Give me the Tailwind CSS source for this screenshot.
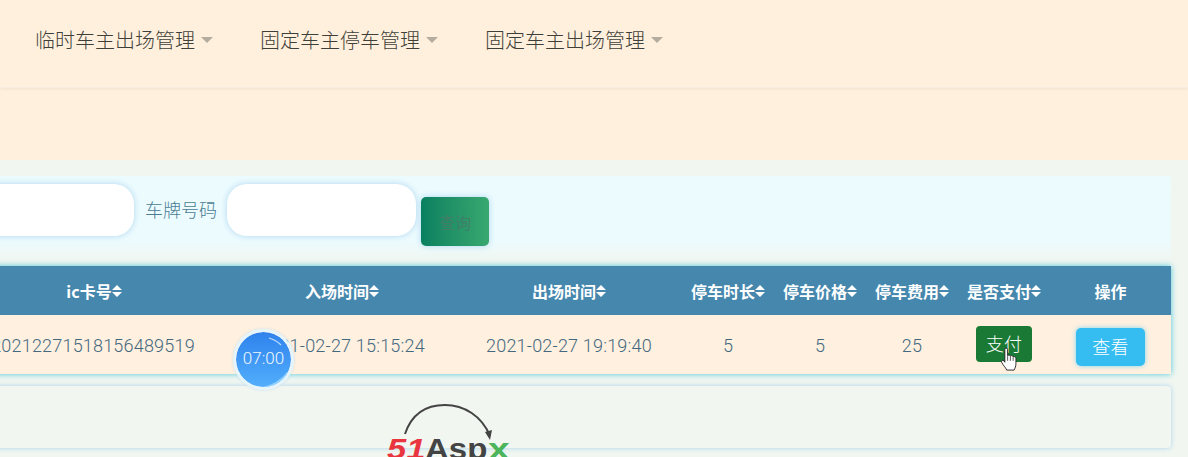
<!DOCTYPE html>
<html lang="zh-CN">
<head>
<meta charset="UTF-8">
<title>停车管理</title>
<script src="https://cdn.jsdelivr.net/npm/@tailwindcss/browser@4"></script>
</head>
<body class="bg-[#f1f6f0] font-['Noto_Sans_CJK_SC','Noto_Sans',sans-serif]">
<div class="relative w-[1188px] h-[457px] overflow-hidden">
  <!-- top nav -->
  <div class="bg-[#fff0dd]">
    <nav class="h-[88px] flex items-center gap-[47px] pl-[35px] pb-[8px] text-[20px] font-light text-[#3f3f3a] border-b border-[#f6ece0] shadow-[0_1px_3px_rgba(0,0,0,0.06)]">
      <a class="flex items-center">临时车主出场管理<span class="ml-[6px] w-0 h-0 border-x-[6px] border-x-transparent border-t-[6px] border-t-[#b5aca0]"></span></a>
      <a class="flex items-center">固定车主停车管理<span class="ml-[6px] w-0 h-0 border-x-[6px] border-x-transparent border-t-[6px] border-t-[#b5aca0]"></span></a>
      <a class="flex items-center">固定车主出场管理<span class="ml-[6px] w-0 h-0 border-x-[6px] border-x-transparent border-t-[6px] border-t-[#b5aca0]"></span></a>
    </nav>
    <div class="h-[72px]"></div>
  </div>

  <!-- content, scrolled sideways so the left part is cut off -->
  <div class="w-[1211px] -ml-[40px] pt-[16px]">
    <!-- search -->
    <div class="h-[86px] bg-linear-to-b from-[#ecfbfe] from-75% to-[#f1f6f0] flex items-start pt-[8px] pl-[15px]">
      <div class="w-[159px] h-[52px] bg-white rounded-[20px] shadow-[0_0_6px_#aed6f0]"></div>
      <label class="ml-[11px] mr-[10px] h-[52px] leading-[50px] text-[18px] font-light text-[#4a7c93]">车牌号码</label>
      <div class="w-[189px] h-[52px] bg-white rounded-[20px] shadow-[0_0_6px_#aed6f0]"></div>
      <button class="ml-[5px] mt-[13px] w-[68px] h-[49px] rounded-[5px] bg-linear-to-r from-[#078060] to-[#38a870] text-[16px] text-[#3f7f68] shadow-[0_0_6px_#aed6f0]">查询</button>
    </div>

    <!-- table -->
    <div class="mt-[4px] shadow-[0_0_6px_#4fc6d8]">
      <div class="h-[49px] bg-[#4587ad] grid grid-cols-[268px_228px_226px_92px_92px_92px_92px_121px] items-center text-center text-[16px] font-bold text-white">
        <div class="flex items-center justify-center">ic卡号<svg class="w-[10px] h-[14px]" viewBox="0 0 10 14" fill="#fff"><path d="M5 1 10 6H0zM5 13 0 8h10z"/></svg></div>
        <div class="flex items-center justify-center">入场时间<svg class="w-[10px] h-[14px]" viewBox="0 0 10 14" fill="#fff"><path d="M5 1 10 6H0zM5 13 0 8h10z"/></svg></div>
        <div class="flex items-center justify-center">出场时间<svg class="w-[10px] h-[14px]" viewBox="0 0 10 14" fill="#fff"><path d="M5 1 10 6H0zM5 13 0 8h10z"/></svg></div>
        <div class="flex items-center justify-center">停车时长<svg class="w-[10px] h-[14px]" viewBox="0 0 10 14" fill="#fff"><path d="M5 1 10 6H0zM5 13 0 8h10z"/></svg></div>
        <div class="flex items-center justify-center">停车价格<svg class="w-[10px] h-[14px]" viewBox="0 0 10 14" fill="#fff"><path d="M5 1 10 6H0zM5 13 0 8h10z"/></svg></div>
        <div class="flex items-center justify-center">停车费用<svg class="w-[10px] h-[14px]" viewBox="0 0 10 14" fill="#fff"><path d="M5 1 10 6H0zM5 13 0 8h10z"/></svg></div>
        <div class="flex items-center justify-center">是否支付<svg class="w-[10px] h-[14px]" viewBox="0 0 10 14" fill="#fff"><path d="M5 1 10 6H0zM5 13 0 8h10z"/></svg></div>
        <div>操作</div>
      </div>
      <div class="h-[59px] bg-[#fff0df] grid grid-cols-[268px_228px_226px_92px_92px_92px_92px_121px] items-center text-center text-[18px] tracking-[0.2px] font-light font-['Roboto','Noto_Sans_CJK_SC',sans-serif] text-[#44697f]">
        <div class="pr-[2px] pt-[1px]">20212271518156489519</div>
        <div class="pt-[1px]">2021-02-27 15:15:24</div>
        <div class="pt-[1px]">2021-02-27 19:19:40</div>
        <div class="pt-[1px]">5</div>
        <div class="pt-[1px]">5</div>
        <div class="pt-[1px]">25</div>
        <div class="flex justify-center"><button class="w-[56px] h-[36px] mb-[2px] rounded-[4px] bg-[#1a7a35] text-white text-[18px] font-light font-['Noto_Sans_CJK_SC',sans-serif]">支付</button></div>
        <div class="flex justify-center"><button class="w-[69px] h-[38px] mt-[4px] rounded-[5px] bg-[#35bdf2] text-white text-[18px] font-light font-['Noto_Sans_CJK_SC',sans-serif] shadow-[0_0_5px_#7fd6f0]">查看</button></div>
      </div>
    </div>

    <!-- footer panel -->
    <div class="mt-[12px] h-[62px] bg-[#f2f6f1] rounded-[4px] shadow-[0_0_5px_#a8d2ea]"></div>
  </div>

  <!-- timer badge -->
  <div class="absolute left-[233px] top-[329px] w-[61px] h-[61px] rounded-full border-[3px] border-[#e6f5fb] bg-clip-padding bg-linear-to-b from-[#2f82ec] to-[#52aefc] shadow-[0_0_3px_#c5dcea] flex items-center justify-center pb-[2px] text-[17px] font-light font-['Roboto',sans-serif] text-[#f0f8ff] overflow-hidden">
    07:00
    <svg class="absolute inset-0 w-full h-full" viewBox="0 0 55 55" fill="none"><path d="M33 6Q40 8 45 13" stroke="#bcdcff" stroke-width="1.3"/><path d="M26 55Q42 52 51 40L55 55Z" fill="#8fd0ff"/></svg>
  </div>

  <!-- hand cursor -->
  <svg class="absolute left-[1000px] top-[347px] w-[18px] h-[24px]" viewBox="0 0 19 26"><path d="M5 2.500C5 .8 8 .8 8 2.500V9.500C8.500 8.500 10.500 8.500 11 9.800 11.800 9 13.500 9.200 14 10.500 15 10 17 10.500 17 12.500V18C17 21 16 23 15 25H7C6 22 3 20 1.500 16.500 .8 15 2.500 13.500 4 15L5 16.500Z" fill="#fff" stroke="#222" stroke-width="1"/><path d="M8 10v5M11 10v5M14 11v4" stroke="#222" stroke-width=".8"/></svg>

  <!-- 51Aspx watermark -->
  <div class="absolute left-[387px] top-[402px] w-[126px] h-[55px]">
    <svg class="absolute left-[16px] top-[0px] w-[92px] h-[40px]" viewBox="0 0 92 40" fill="none"><path d="M2 32C9 11 24 3 42 3 61 3 79 14 87 34" stroke="#444" stroke-width="2"/><path d="M82 30 87 38 89 28Z" fill="#444"/></svg>
    <div class="absolute left-0 top-[29px] flex whitespace-nowrap text-[30px] leading-[36px] font-['Liberation_Sans',sans-serif] font-bold">
      <span class="w-[38px] origin-left scale-x-[1.15] italic text-[#e8353f]">51</span>
      <span class="w-[63px] origin-left scale-x-[1.1] text-[#444]">Asp</span>
      <span class="origin-left scale-x-[1.3] text-[#4cb45a]">x</span>
    </div>
  </div>
</div>
</body>
</html>
